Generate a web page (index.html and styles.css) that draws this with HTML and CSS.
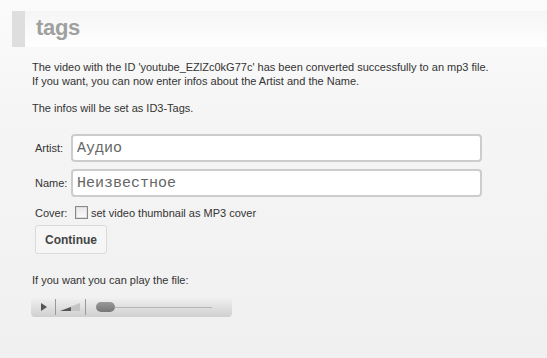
FILE: index.html
```html
<!DOCTYPE html>
<html>
<head>
<meta charset="utf-8">
<link rel="stylesheet" href="styles.css">
</head>
<body>
<div class="page">
  <div class="titlebar">
    <div class="titlemark"></div>
    <h1 class="title">tags</h1>
  </div>
  <div class="content">
    <p class="intro">The video with the ID 'youtube_EZlZc0kG77c' has been converted successfully to an mp3 file.<br>If you want, you can now enter infos about the Artist and the Name.</p>
    <p class="intro">The infos will be set as ID3-Tags.</p>
    <form class="form">
      <div class="row">
        <label class="label">Artist:</label>
        <input class="field" type="text" value="Аудио">
      </div>
      <div class="row">
        <label class="label">Name:</label>
        <input class="field" type="text" value="Неизвестное">
      </div>
      <div class="row cover">
        <span class="label">Cover:</span>
        <span class="check"></span>
        <span class="checktext">set video thumbnail as MP3 cover</span>
      </div>
      <button class="btn" type="button">Continue</button>
    </form>
    <p class="play">If you want you can play the file:</p>
    <div class="player">
      <div class="pbtn">
        <svg width="8" height="10" viewBox="0 0 8 10"><path d="M1 1 L7 5 L1 9 Z" fill="#555"/></svg>
      </div>
      <div class="sep"></div>
      <div class="vol">
        <svg width="22" height="10" viewBox="0 0 22 10"><path d="M0 9 L20 1 L20 9 Z" fill="#c4c4c4"/><path d="M0 9 L11 5 L11 9 Z" fill="#555"/></svg>
      </div>
      <div class="sep"></div>
      <div class="seek">
        <div class="thumb"></div>
        <div class="track"></div>
      </div>
    </div>
  </div>
</div>
</body>
</html>
```
FILE: styles.css
```css
html, body {
  margin: 0;
  padding: 0;
}
body {
  background: linear-gradient(#fbfbfb 0px, #f5f5f5 120px, #f0f0f0 358px);
  font-family: "Liberation Sans", Arial, sans-serif;
  font-size: 11px;
  color: #333;
  height: 358px;
  overflow: hidden;
}
.page {
  padding-top: 11px;
}
.titlebar {
  margin-left: 12px;
  height: 36px;
  display: flex;
  align-items: stretch;
  background: linear-gradient(#f5f5f5, #ffffff);
}
.titlemark {
  width: 13px;
  background: #dedede;
}
.title {
  margin: 0;
  padding-left: 11px;
  font-size: 22px;
  font-weight: bold;
  color: #a0a0a0;
  line-height: 34px;
  letter-spacing: -0.3px;
}
.content {
  padding: 13px 0 0 32px;
}
.intro {
  margin: 0 0 13px 0;
  line-height: 14px;
}
.form {
  margin-top: 19px;
  padding-left: 3px;
}
.row {
  display: flex;
  align-items: center;
  margin-bottom: 7px;
}
.label {
  width: 36px;
  flex: none;
}
.field {
  width: 411px;
  height: 28px;
  box-sizing: border-box;
  border: 2px solid #cccccc;
  border-radius: 4px;
  background: #fff;
  font-family: "Liberation Mono", "Courier New", monospace;
  font-size: 15px;
  color: #666;
  padding: 0 4px;
  margin: 0;
  outline: none;
}
.row.cover {
  margin-top: 9px;
  margin-bottom: 6px;
}
.check {
  width: 11px;
  height: 11px;
  border: 1px solid #888;
  background: linear-gradient(#e8e8e8, #fafafa);
  margin-left: 4px;
  margin-right: 3px;
  box-shadow: inset 0 0 0 1px #ddd;
}
.checktext {
  font-size: 11px;
}
.btn {
  display: block;
  width: 72px;
  height: 29px;
  border: 1px solid #dadada;
  border-radius: 3px;
  background: #f6f6f6;
  font-family: "Liberation Sans", Arial, sans-serif;
  font-size: 12px;
  font-weight: bold;
  color: #444;
  padding: 0;
}
.play {
  margin: 19px 0 0 0;
  line-height: 14px;
}
.player {
  margin-top: 10px;
  margin-left: -1px;
  width: 201px;
  height: 20px;
  border-radius: 4px;
  background: linear-gradient(#f2f2f2, #cfcfcf);
  display: flex;
  align-items: center;
}
.pbtn {
  width: 24px;
  display: flex;
  justify-content: center;
  padding-left: 2px;
  box-sizing: border-box;
}
.pbtn svg { display: block; }
.sep {
  width: 1px;
  height: 16px;
  background: #999;
}
.vol {
  width: 29px;
  display: flex;
  justify-content: center;
}
.vol svg { display: block; }
.seek {
  flex: 1;
  display: flex;
  align-items: center;
  padding-left: 10px;
  padding-right: 20px;
}
.thumb {
  width: 19px;
  height: 10px;
  border-radius: 5px;
  background: linear-gradient(#999, #777);
  flex: none;
}
.track {
  flex: 1;
  height: 1px;
  background: #b5b5b5;
}
```
